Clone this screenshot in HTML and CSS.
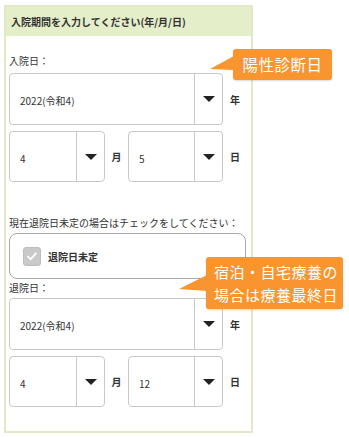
FILE: index.html
```html
<!DOCTYPE html>
<html lang="ja">
  <head>
    <meta charset="UTF-8" />
    <meta name="viewport" content="width=device-width, initial-scale=1.0" />
    <title>入院期間</title>
    <link rel="stylesheet" href="styles.css">
  </head>
  <body>
    <div class="panel">
      <div class="panel-head">入院期間を入力してください(年/月/日)</div>
      <div class="panel-body">
        <p class="label label-in">入院日：</p>
        <div class="row">
          <div class="select select-year"><span class="val">2022(令和4)</span><span class="arrow"></span></div>
          <span class="unit">年</span>
        </div>
        <div class="row">
          <div class="select select-small"><span class="val">4</span><span class="arrow"></span></div>
          <span class="unit unit-mid">月</span>
          <div class="select select-small select-day"><span class="val">5</span><span class="arrow"></span></div>
          <span class="unit">日</span>
        </div>

        <p class="label label-check">現在退院日未定の場合はチェックをしてください：</p>
        <div class="check-box">
          <span class="check">
            <svg width="12" height="10" viewBox="0 0 12 10"><path d="M1.5 5.2 L4.6 8.2 L10.5 1.8" fill="none" stroke="#fff" stroke-width="1.8"/></svg>
          </span>
          <span class="check-label">退院日未定</span>
        </div>

        <p class="label label-out">退院日：</p>
        <div class="row">
          <div class="select select-year"><span class="val">2022(令和4)</span><span class="arrow"></span></div>
          <span class="unit">年</span>
        </div>
        <div class="row">
          <div class="select select-small"><span class="val">4</span><span class="arrow"></span></div>
          <span class="unit unit-mid">月</span>
          <div class="select select-small select-day"><span class="val">12</span><span class="arrow"></span></div>
          <span class="unit">日</span>
        </div>
      </div>
    </div>

    <div class="callout callout-1">
      <svg class="tail" width="24" height="16" viewBox="0 0 24 16"><polygon points="24,0 0,13 24,14" fill="#f8952f"/></svg>
      陽性診断日
    </div>
    <div class="callout callout-2">
      <svg class="tail" width="28" height="18" viewBox="0 0 28 18"><polygon points="28,0 0,14 28,16" fill="#f8952f"/></svg>
      宿泊・自宅療養の<br>場合は療養最終日
    </div>
  </body>
</html>
```

FILE: styles.css
```css
* {
  margin: 0;
  padding: 0;
  box-sizing: border-box;
}
body {
  font-family: "Noto Sans CJK JP", "Noto Sans", sans-serif;
  color: #333;
  background: #fff;
  position: relative;
  width: 349px;
  height: 437px;
  overflow: hidden;
}
.panel {
  margin: 5px 0 0 4px;
  width: 249px;
  height: 428px;
  border: 2px solid #e2e9c6;
}
.panel-head {
  height: 29px;
  background: #e4eec9;
  font-size: 10px;
  font-weight: bold;
  line-height: 29px;
  padding-left: 5px;
}
.panel-body {
  padding: 0 0 0 3px;
}
.label {
  font-size: 10px;
  line-height: 14px;
}
.label-in {
  margin-top: 18px;
  margin-bottom: 5px;
}
.label-check {
  margin-top: 34px;
  margin-bottom: 3px;
}
.label-out {
  margin-top: 2px;
  margin-bottom: 3px;
}
.row {
  display: flex;
  align-items: center;
  margin-bottom: 6px;
}
.select {
  display: flex;
  height: 52px;
  border: 1px solid #c9c9c9;
  border-radius: 4px;
  background: #fff;
}
.select .val {
  flex: 1;
  display: flex;
  align-items: center;
  padding-left: 10px;
  font-size: 10px;
  padding-top: 3px;
}
.select .arrow {
  width: 28px;
  border-left: 1px solid #c9c9c9;
  display: flex;
  align-items: center;
  justify-content: center;
}
.select .arrow::after {
  content: "";
  border-left: 6px solid transparent;
  border-right: 6px solid transparent;
  border-top: 6px solid #222;
}
.select-year {
  width: 214px;
}
.select-small {
  width: 96px;
  height: 51px;
}
.select-day {
  width: 95px;
}
.unit {
  width: 24px;
  text-align: center;
  font-size: 10px;
  font-weight: bold;
}
.unit-mid {
  width: 23px;
}
.check-box {
  width: 237px;
  height: 46px;
  border: 1px solid #a9a9a9;
  border-radius: 8px;
  display: flex;
  align-items: center;
  padding-left: 13px;
}
.check {
  width: 18px;
  height: 19px;
  background: #c9c9c9;
  border: 1px solid #bdbdbd;
  border-radius: 3px;
  display: flex;
  align-items: center;
  justify-content: center;
}
.check-label {
  margin-left: 7px;
  font-size: 10px;
  font-weight: bold;
}
.callout {
  position: absolute;
  background: #f8952f;
  color: #fff;
  border-radius: 3px;
  box-shadow: 0 1px 2px rgba(0, 0, 0, 0.15);
  font-size: 15.5px;
  letter-spacing: 0.5px;
}
.callout .tail {
  position: absolute;
  display: block;
}
.callout-1 {
  left: 233px;
  top: 49px;
  width: 99px;
  height: 31px;
  line-height: 31px;
  text-align: center;
}
.callout-1 .tail {
  left: -23px;
  top: 7px;
}
.callout-2 {
  left: 206px;
  top: 257px;
  width: 137px;
  height: 52px;
  line-height: 23px;
  padding: 3px 0 0 8px;
  font-size: 15px;
}
.callout-2 .tail {
  left: -27px;
  top: 18px;
}
```
